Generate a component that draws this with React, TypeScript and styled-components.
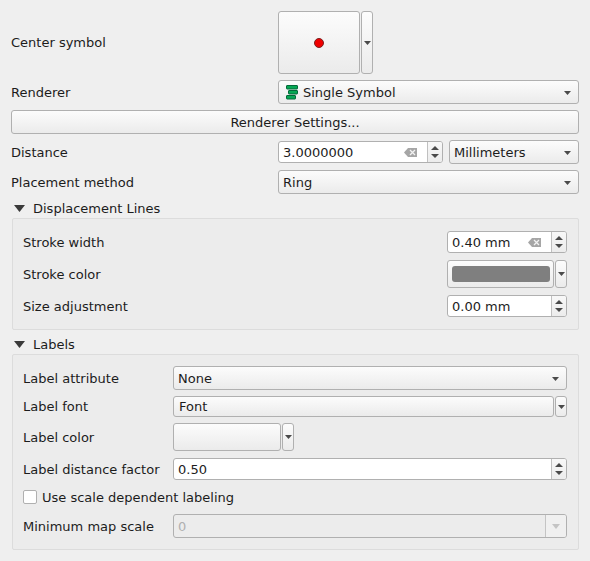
import React from "react";
import styled, { createGlobalStyle } from "styled-components";

const Global = createGlobalStyle`
  html, body { margin: 0; padding: 0; background: #efefef; }
  body { font-family: "DejaVu Sans", sans-serif; font-size: 13px; color: #1c1c1c; }
`;

const Panel = styled.div`
  width: 590px;
  height: 561px;
  box-sizing: border-box;
  padding: 11px 11px 0;
  display: flex;
  flex-direction: column;
  overflow: hidden;
`;

const TopRows = styled.div`
  display: flex;
  flex-direction: column;
  gap: 6px;
`;

const Row = styled.div<{ $h: number; $label: number; $top?: number }>`
  display: grid;
  grid-template-columns: ${(p) => p.$label}px 1fr;
  align-items: center;
  height: ${(p) => p.$h}px;
  margin-top: ${(p) => p.$top ?? 0}px;
`;

const Label = styled.span<{ $flush?: boolean }>`
  white-space: nowrap;
  line-height: 16px;
  padding-top: ${(p) => (p.$flush ? 0 : 2)}px;
`;

const Field = styled.div`
  display: flex;
  align-items: center;
  height: 100%;
  min-width: 0;
`;

const raised = `
  box-sizing: border-box;
  border: 1px solid #b0b0b0;
  border-radius: 3px;
  background: linear-gradient(to bottom, #fcfcfc 0%, #ebebeb 100%);
`;

const Combo = styled.div<{ $w?: number; $gapLeft?: number }>`
  ${raised}
  ${(p) => (p.$w ? `width: ${p.$w}px; flex: none;` : "flex: 1;")}
  margin-left: ${(p) => p.$gapLeft ?? 0}px;
  height: 24px;
  display: flex;
  align-items: center;
  position: relative;
`;

const ComboText = styled.span`
  padding-left: 4px;
`;

const ComboArrow = styled.svg`
  position: absolute;
  right: 7px;
  top: 10px;
  width: 7px;
  height: 4px;
  fill: #4a4a4a;
`;

const PushButton = styled.div`
  ${raised}
  height: 24px;
  text-align: center;
  line-height: 23px;
`;

const SymbolButton = styled.div<{ $w: number; $h: number }>`
  ${raised}
  width: ${(p) => p.$w}px;
  height: ${(p) => p.$h}px;
  flex: none;
  display: flex;
  align-items: center;
  justify-content: center;
`;

const MenuButton = styled.div<{ $h: number }>`
  ${raised}
  width: 12px;
  height: ${(p) => p.$h}px;
  flex: none;
  margin-left: 1px;
  display: flex;
  align-items: center;
  justify-content: center;
`;

const MenuArrow = styled.svg`
  width: 7px;
  height: 4px;
  fill: #4a4a4a;
`;

const Dot = styled.span`
  width: 8px;
  height: 8px;
  border-radius: 50%;
  background: #f00000;
  border: 1px solid #7a2020;
`;

const WideSymbol = styled.div`
  ${raised}
  flex: 1;
  height: 21px;
  padding-left: 5px;
  line-height: 19px;
`;

const Swatch = styled.div<{ $w: number }>`
  ${raised}
  width: ${(p) => p.$w}px;
  height: 28px;
  flex: none;
  padding: 5px 3px 5px 4px;
`;

const SwatchFill = styled.div`
  height: 100%;
  border-radius: 3px;
  background: #7f7f7f;
`;

const Spin = styled.div<{ $w?: number }>`
  box-sizing: border-box;
  ${(p) => (p.$w ? `width: ${p.$w}px; flex: none;` : "flex: 1;")}
  height: 22px;
  display: flex;
  align-items: center;
  background: #fff;
  border: 1px solid #b0b0b0;
  border-radius: 3px;
`;

const SpinText = styled.span`
  flex: 1;
  padding-left: 4px;
  white-space: nowrap;
`;

const ClearIcon = styled.svg`
  width: 13px;
  height: 9px;
  margin-right: 10px;
`;

const SpinButtons = styled.div`
  width: 14px;
  height: 100%;
  border-left: 1px solid #c0c0c0;
  background: linear-gradient(to bottom, #f8f8f8, #ececec);
  border-radius: 0 2px 2px 0;
  display: flex;
  flex-direction: column;
  align-items: center;
  justify-content: center;
  gap: 4px;
`;

const SpinArrow = styled.svg`
  width: 8px;
  height: 4px;
  fill: #4a4a4a;
`;

const Section = styled.div`
  box-sizing: border-box;
  height: 24px;
  padding: 4px 0 0 3px;
  display: flex;
  align-items: center;
  gap: 8px;
`;

const Triangle = styled.svg`
  width: 11px;
  height: 7px;
  fill: #3a3a3a;
  flex: none;
`;

const Group = styled.div<{ $top: number; $bottom: number }>`
  box-sizing: border-box;
  margin-left: 1px;
  width: 567px;
  border: 1px solid #dcdcdc;
  border-radius: 2px;
  background: #ececec;
  padding: ${(p) => p.$top}px 11px ${(p) => p.$bottom}px 10px;
  display: flex;
  flex-direction: column;
`;

const CheckRow = styled.div`
  display: flex;
  align-items: center;
  gap: 5px;
  height: 14px;
  margin-top: 10px;
`;

const Check = styled.span`
  box-sizing: border-box;
  width: 14px;
  height: 14px;
  background: #fff;
  border: 1px solid #b0b0b0;
  border-radius: 2px;
`;

const DisabledCombo = styled.div`
  box-sizing: border-box;
  flex: 1;
  height: 24px;
  display: flex;
  align-items: center;
  background: #ececec;
  border: 1px solid #b0b0b0;
  border-radius: 3px;
  color: #b0b0b0;
  padding-left: 4px;
`;

const DisabledText = styled.span`
  flex: 1;
`;

const DisabledDrop = styled.div`
  width: 20px;
  height: 100%;
  border-left: 1px solid #c4c4c4;
  background: #f0f0f0;
  border-radius: 0 2px 2px 0;
  display: flex;
  align-items: center;
  justify-content: center;
`;

const DisabledArrow = styled.svg`
  width: 8px;
  height: 5px;
  fill: #c4c4c4;
`;

const RendererGlyph = styled.svg`
  width: 14px;
  height: 15px;
  flex: none;
  margin-left: 7px;
  margin-right: 3px;
`;

const Down = () => (
  <ComboArrow viewBox="0 0 7 4"><path d="M0 0h7L3.5 4z" /></ComboArrow>
);
const Menu = ({ h }: { h: number }) => (
  <MenuButton $h={h}>
    <MenuArrow viewBox="0 0 7 4"><path d="M0 0h7L3.5 4z" /></MenuArrow>
  </MenuButton>
);
const Clear = () => (
  <ClearIcon viewBox="0 0 13 9">
    <path d="M4 0h9v9H4L0 4.5z" fill="#a6a6a6" />
    <path d="M6 2l5 5M11 2l-5 5" stroke="#f2f2f2" strokeWidth="1.3" />
  </ClearIcon>
);
const Steppers = () => (
  <SpinButtons>
    <SpinArrow viewBox="0 0 8 4"><path d="M4 0l4 4H0z" /></SpinArrow>
    <SpinArrow viewBox="0 0 8 4"><path d="M0 0h8L4 4z" /></SpinArrow>
  </SpinButtons>
);
const RendererIcon = () => (
  <RendererGlyph viewBox="0 0 14 15">
    <rect x="0.5" y="0.5" width="11" height="3.5" rx="0.5" fill="#06a854" stroke="#04693a" />
    <rect x="2.5" y="5.5" width="9" height="3.5" rx="0.5" fill="#06a854" stroke="#04693a" />
    <rect x="0.5" y="10.5" width="9" height="3.5" rx="0.5" fill="#06a854" stroke="#04693a" />
  </RendererGlyph>
);
const SectionArrow = () => (
  <Triangle viewBox="0 0 11 7"><path d="M0 0h11L5.5 7z" /></Triangle>
);

export default function App() {
  return (
    <Panel>
      <Global />
      <TopRows>
        <Row $h={63} $label={267}>
          <Label $flush>Center symbol</Label>
          <Field>
            <SymbolButton $w={82} $h={63}><Dot /></SymbolButton>
            <Menu h={63} />
          </Field>
        </Row>
        <Row $h={24} $label={267}>
          <Label>Renderer</Label>
          <Field>
            <Combo>
              <RendererIcon />
              <span>Single Symbol</span>
              <Down />
            </Combo>
          </Field>
        </Row>
        <PushButton>Renderer Settings...</PushButton>
        <Row $h={24} $label={267}>
          <Label>Distance</Label>
          <Field>
            <Spin $w={165}>
              <SpinText>3.0000000</SpinText>
              <Clear />
              <Steppers />
            </Spin>
            <Combo $w={130} $gapLeft={6}>
              <ComboText>Millimeters</ComboText>
              <Down />
            </Combo>
          </Field>
        </Row>
        <Row $h={24} $label={267}>
          <Label>Placement method</Label>
          <Field>
            <Combo>
              <ComboText>Ring</ComboText>
              <Down />
            </Combo>
          </Field>
        </Row>
      </TopRows>

      <Section>
        <SectionArrow />
        <span>Displacement Lines</span>
      </Section>
      <Group $top={12} $bottom={12}>
        <Row $h={22} $label={424}>
          <Label>Stroke width</Label>
          <Field>
            <Spin $w={120}>
              <SpinText>0.40 mm</SpinText>
              <Clear />
              <Steppers />
            </Spin>
          </Field>
        </Row>
        <Row $h={28} $label={424} $top={7}>
          <Label>Stroke color</Label>
          <Field>
            <Swatch $w={107}><SwatchFill /></Swatch>
            <Menu h={28} />
          </Field>
        </Row>
        <Row $h={22} $label={424} $top={7}>
          <Label>Size adjustment</Label>
          <Field>
            <Spin $w={120}>
              <SpinText>0.00 mm</SpinText>
              <Steppers />
            </Spin>
          </Field>
        </Row>
      </Group>

      <Section>
        <SectionArrow />
        <span>Labels</span>
      </Section>
      <Group $top={11} $bottom={11}>
        <Row $h={24} $label={150}>
          <Label>Label attribute</Label>
          <Field>
            <Combo>
              <ComboText>None</ComboText>
              <Down />
            </Combo>
          </Field>
        </Row>
        <Row $h={21} $label={150} $top={6}>
          <Label $flush>Label font</Label>
          <Field>
            <WideSymbol>Font</WideSymbol>
            <Menu h={21} />
          </Field>
        </Row>
        <Row $h={28} $label={150} $top={6}>
          <Label>Label color</Label>
          <Field>
            <Swatch $w={108} />
            <Menu h={28} />
          </Field>
        </Row>
        <Row $h={22} $label={150} $top={7}>
          <Label>Label distance factor</Label>
          <Field>
            <Spin>
              <SpinText>0.50</SpinText>
              <Steppers />
            </Spin>
          </Field>
        </Row>
        <CheckRow>
          <Check />
          <span>Use scale dependent labeling</span>
        </CheckRow>
        <Row $h={24} $label={150} $top={10}>
          <Label>Minimum map scale</Label>
          <Field>
            <DisabledCombo>
              <DisabledText>0</DisabledText>
              <DisabledDrop>
                <DisabledArrow viewBox="0 0 8 5"><path d="M0 0h8L4 5z" /></DisabledArrow>
              </DisabledDrop>
            </DisabledCombo>
          </Field>
        </Row>
      </Group>
    </Panel>
  );
}
